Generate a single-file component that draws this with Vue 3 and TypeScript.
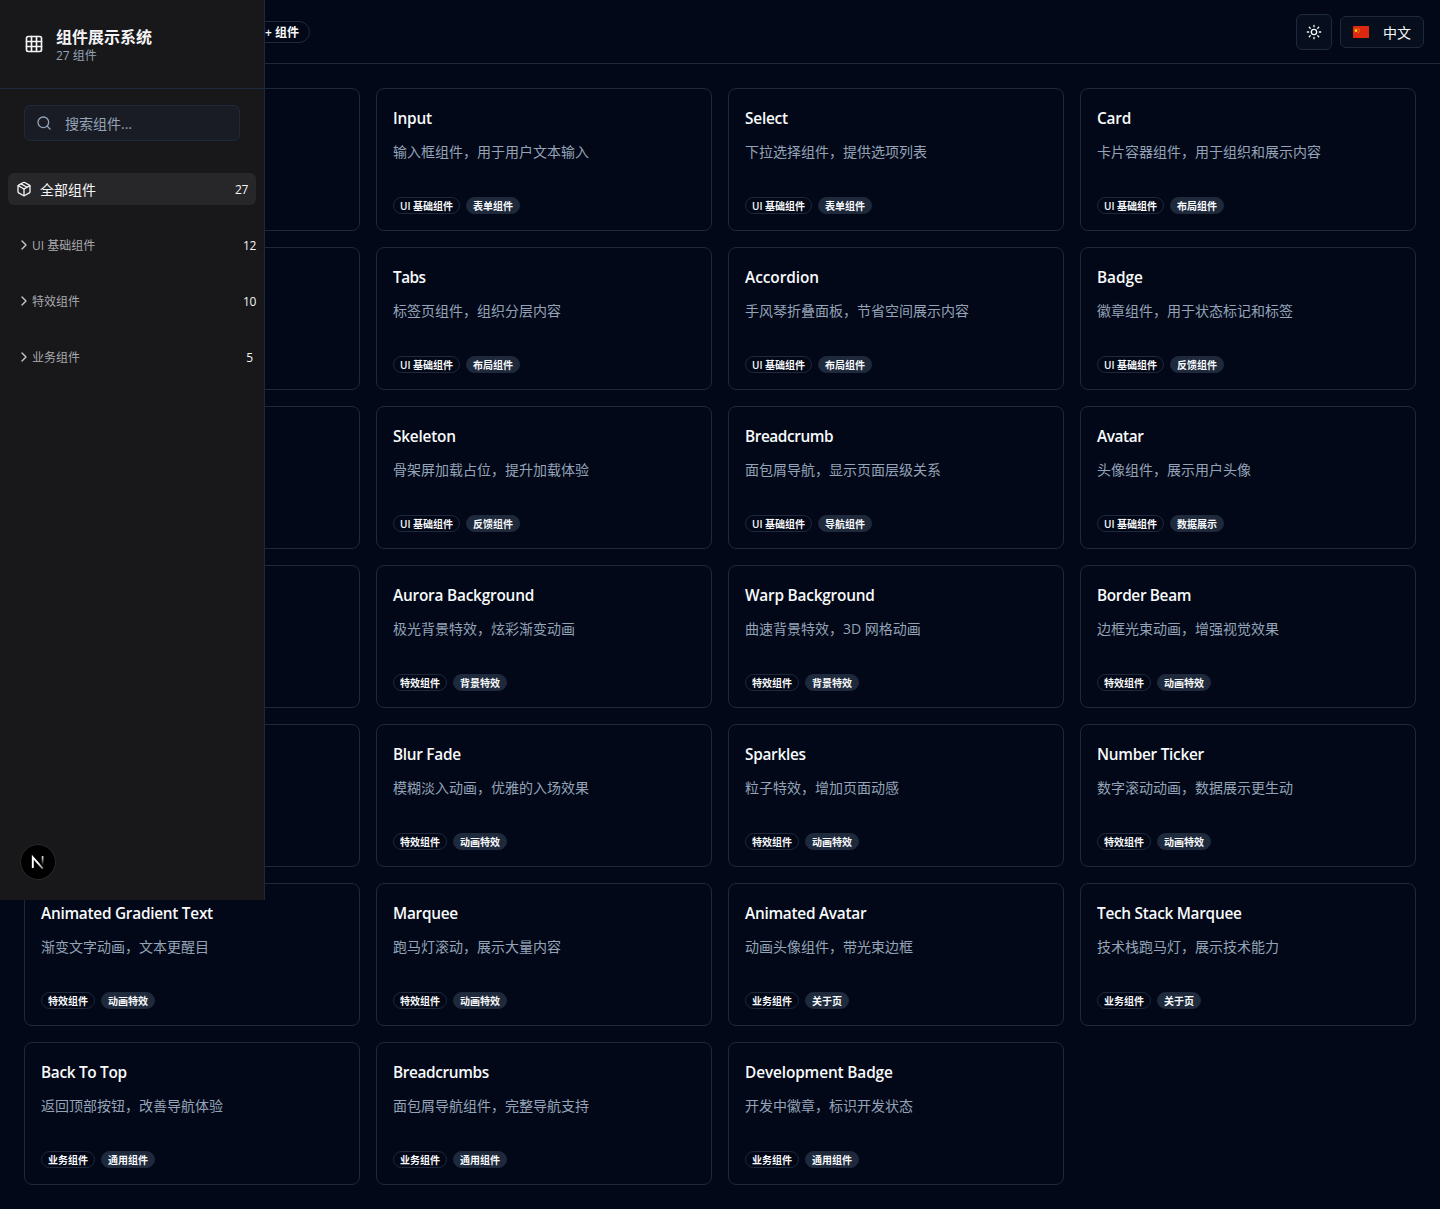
<script setup lang="ts">
interface Card {
  title: string
  desc: string
  category: string
  tag: string
  tracking?: number
}

interface Group {
  name: string
  count: number
}

const groups: Group[] = [
  { name: 'UI 基础组件', count: 12 },
  { name: '特效组件', count: 10 },
  { name: '业务组件', count: 5 },
]

const UI = 'UI 基础组件'
const FX = '特效组件'
const BIZ = '业务组件'

const cards: (Card | null)[] = [
  null,
  { title: 'Input', desc: '输入框组件，用于用户文本输入', category: UI, tag: '表单组件' },
  { title: 'Select', desc: '下拉选择组件，提供选项列表', category: UI, tag: '表单组件' },
  { title: 'Card', desc: '卡片容器组件，用于组织和展示内容', category: UI, tag: '布局组件' },
  null,
  { title: 'Tabs', desc: '标签页组件，组织分层内容', category: UI, tag: '布局组件', tracking: -0.55 },
  { title: 'Accordion', desc: '手风琴折叠面板，节省空间展示内容', category: UI, tag: '布局组件', tracking: -0.05 },
  { title: 'Badge', desc: '徽章组件，用于状态标记和标签', category: UI, tag: '反馈组件', tracking: -0.05 },
  null,
  { title: 'Skeleton', desc: '骨架屏加载占位，提升加载体验', category: UI, tag: '反馈组件' },
  { title: 'Breadcrumb', desc: '面包屑导航，显示页面层级关系', category: UI, tag: '导航组件', tracking: -0.43 },
  { title: 'Avatar', desc: '头像组件，展示用户头像', category: UI, tag: '数据展示', tracking: -0.4 },
  null,
  { title: 'Aurora Background', desc: '极光背景特效，炫彩渐变动画', category: FX, tag: '背景特效' },
  { title: 'Warp Background', desc: '曲速背景特效，3D 网格动画', category: FX, tag: '背景特效' },
  { title: 'Border Beam', desc: '边框光束动画，增强视觉效果', category: FX, tag: '动画特效', tracking: -0.35 },
  null,
  { title: 'Blur Fade', desc: '模糊淡入动画，优雅的入场效果', category: FX, tag: '动画特效', tracking: -0.3 },
  { title: 'Sparkles', desc: '粒子特效，增加页面动感', category: FX, tag: '动画特效', tracking: -0.3 },
  { title: 'Number Ticker', desc: '数字滚动动画，数据展示更生动', category: FX, tag: '动画特效', tracking: -0.28 },
  { title: 'Animated Gradient Text', desc: '渐变文字动画，文本更醒目', category: FX, tag: '动画特效', tracking: -0.27 },
  { title: 'Marquee', desc: '跑马灯滚动，展示大量内容', category: FX, tag: '动画特效', tracking: -0.28 },
  { title: 'Animated Avatar', desc: '动画头像组件，带光束边框', category: BIZ, tag: '关于页', tracking: -0.27 },
  { title: 'Tech Stack Marquee', desc: '技术栈跑马灯，展示技术能力', category: BIZ, tag: '关于页', tracking: -0.29 },
  { title: 'Back To Top', desc: '返回顶部按钮，改善导航体验', category: BIZ, tag: '通用组件', tracking: -0.32 },
  { title: 'Breadcrumbs', desc: '面包屑导航组件，完整导航支持', category: BIZ, tag: '通用组件', tracking: -0.38 },
  { title: 'Development Badge', desc: '开发中徽章，标识开发状态', category: BIZ, tag: '通用组件', tracking: -0.13 },
]
</script>

<template>
  <div class="page">
    <header class="topbar">
      <span class="total">27+ 组件</span>
      <div class="actions">
        <button class="theme" aria-label="theme">
          <svg width="16" height="16" viewBox="0 0 24 24" class="icon">
            <circle cx="12" cy="12" r="4" />
            <path d="M12 2v2M12 20v2M4.93 4.93l1.41 1.41M17.66 17.66l1.41 1.41M2 12h2M20 12h2M6.34 17.66l-1.41 1.41M19.07 4.93l-1.41 1.41" />
          </svg>
        </button>
        <button class="lang">
          <svg width="16" height="12" viewBox="0 0 16 12">
            <rect width="16" height="12" rx="0.5" fill="#de2910" />
            <path fill="#ffde00" d="M3 2.1l.56 1.7h1.8L3.9 4.86l.56 1.7L3 5.5 1.54 6.56l.56-1.7L.64 3.8h1.8z" />
            <circle cx="5.5" cy="2.2" r=".45" fill="#ffde00" />
            <circle cx="6.6" cy="3.4" r=".45" fill="#ffde00" />
            <circle cx="6.6" cy="5" r=".45" fill="#ffde00" />
            <circle cx="5.5" cy="6.3" r=".45" fill="#ffde00" />
          </svg>
          <span>中文</span>
        </button>
      </div>
    </header>

    <main class="grid">
      <article v-for="(card, i) in cards" :key="i" class="card">
        <template v-if="card">
          <h3 :style="{ letterSpacing: `${card.tracking ?? -0.22}px` }">{{ card.title }}</h3>
          <p>{{ card.desc }}</p>
          <div class="badges">
            <span class="badge outline">{{ card.category }}</span>
            <span class="badge solid">{{ card.tag }}</span>
          </div>
        </template>
      </article>
    </main>

    <aside class="sidebar">
      <div class="brand">
        <svg width="20" height="20" viewBox="0 0 24 24" class="icon">
          <rect x="3" y="3" width="18" height="18" rx="2" />
          <path d="M3 9h18M3 15h18M9 3v18M15 3v18" />
        </svg>
        <div class="brand-text">
          <strong>组件展示系统</strong>
          <span>27 组件</span>
        </div>
      </div>
      <div class="search">
        <svg width="16" height="16" viewBox="0 0 24 24" class="icon">
          <circle cx="11" cy="11" r="8" />
          <path d="m21 21-4.3-4.3" />
        </svg>
        <span>搜索组件...</span>
      </div>
      <nav>
        <a class="all">
          <svg width="16" height="16" viewBox="0 0 24 24" class="icon">
            <path d="m7.5 4.27 9 5.15" />
            <path d="M21 8a2 2 0 0 0-1-1.73l-7-4a2 2 0 0 0-2 0l-7 4A2 2 0 0 0 3 8v8a2 2 0 0 0 1 1.73l7 4a2 2 0 0 0 2 0l7-4A2 2 0 0 0 21 16Z" />
            <path d="m3.3 7 8.7 5 8.7-5" />
            <path d="M12 22V12" />
          </svg>
          <span class="all-name">全部组件</span>
          <span class="count">27</span>
        </a>
        <a v-for="g in groups" :key="g.name" class="group">
          <svg width="16" height="16" viewBox="0 0 24 24" class="icon chevron">
            <path d="m9 18 6-6-6-6" />
          </svg>
          <span class="group-name">{{ g.name }}</span>
          <span class="count">{{ g.count }}</span>
        </a>
      </nav>
      <div class="dev">
        <svg width="36" height="36" viewBox="0 0 36 36">
          <defs>
            <linearGradient id="devDiag" x1="20" y1="18" x2="24" y2="24" gradientUnits="userSpaceOnUse">
              <stop offset="0" stop-color="#fff" />
              <stop offset="1" stop-color="#fff" stop-opacity="0.45" />
            </linearGradient>
            <linearGradient id="devBar" x1="22" y1="12" x2="22" y2="21" gradientUnits="userSpaceOnUse">
              <stop offset="0" stop-color="#fff" />
              <stop offset="1" stop-color="#fff" stop-opacity="0" />
            </linearGradient>
          </defs>
          <path d="M12.8 24V13.2L22.8 24.6" fill="none" stroke="url(#devDiag)" stroke-width="1.9" />
          <path d="M22.6 12.2v8.8" fill="none" stroke="url(#devBar)" stroke-width="1.7" />
        </svg>
      </div>
    </aside>
  </div>
</template>

<style>
body {
  background: #020817;
}
</style>

<style scoped>
.page {
  position: relative;
  width: 1440px;
  height: 1209px;
  overflow: hidden;
  box-sizing: border-box;
  background: #020817;
  color: #f8fafc;
  font-family: "Open Sans", "Noto Sans CJK SC", sans-serif;
}
.page * {
  box-sizing: border-box;
}
.icon {
  fill: none;
  stroke: currentColor;
  stroke-width: 2;
  stroke-linecap: round;
  stroke-linejoin: round;
  flex: none;
}
.topbar {
  height: 64px;
  border-bottom: 1px solid #1e293b;
  padding: 1px 16px 0 0;
  display: flex;
  align-items: center;
  justify-content: space-between;
}
.total {
  width: 80px;
  height: 22px;
  margin-left: 230px;
  border: 1px solid #1e293b;
  border-radius: 11px;
  font-size: 12px;
  font-weight: 600;
  line-height: 21px;
  text-align: right;
  padding-right: 10px;
}
.actions {
  display: flex;
  align-items: center;
  gap: 8px;
}
button {
  background: #070e1d;
  border: 1px solid #1e293b;
  border-radius: 6px;
  color: inherit;
  font: inherit;
  padding: 0;
  display: flex;
  align-items: center;
}
.theme {
  width: 36px;
  height: 36px;
  justify-content: center;
}
.lang {
  width: 84px;
  height: 32px;
  padding: 0 12px;
  justify-content: space-between;
  font-size: 14px;
  font-weight: 400;
}
.grid {
  display: grid;
  grid-template-columns: repeat(4, 336px);
  grid-auto-rows: 143px;
  gap: 16px;
  padding: 24px;
}
.card {
  border: 1px solid #1e293b;
  border-radius: 8px;
  padding: 18px 16px 16px;
  display: flex;
  flex-direction: column;
}
h3 {
  margin: 0;
  font-size: 15.4px;
  font-weight: 600;
  line-height: 24px;
  white-space: nowrap;
}
p {
  margin: 11px 0 0;
  font-size: 14px;
  line-height: 20px;
  color: #94a3b8;
}
.badges {
  margin-top: auto;
  display: flex;
  gap: 6px;
}
.badge {
  height: 17px;
  padding: 0 6px;
  border: 1px solid #1e293b;
  border-radius: 9px;
  font-size: 10px;
  font-weight: 600;
  line-height: 16px;
  white-space: nowrap;
}
.solid {
  background: #1e293b;
}
.sidebar {
  position: absolute;
  left: 0;
  top: 0;
  width: 265px;
  height: 900px;
  background: #18181b;
  border-right: 1px solid #1e293b;
  color: #f4f4f5;
}
.brand {
  height: 89px;
  padding: 0 24px;
  border-bottom: 1px solid #1e293b;
  display: flex;
  align-items: center;
  gap: 12px;
}
.brand-text {
  display: flex;
  flex-direction: column;
  padding-top: 4px;
}
.brand-text strong {
  font-size: 16px;
  line-height: 20px;
  font-weight: 700;
}
.brand-text span {
  font-size: 12px;
  line-height: 18px;
  color: #94a3b8;
}
.search {
  margin: 16px 24px 0;
  height: 36px;
  border: 1px solid #1e293b;
  border-radius: 6px;
  background: #191c24;
  display: flex;
  align-items: center;
  gap: 13px;
  padding-left: 11px;
  font-size: 14px;
  color: #94a3b8;
}
nav {
  margin-top: 32px;
  padding: 0 8px;
  display: flex;
  flex-direction: column;
  gap: 24px;
}
.all {
  height: 32px;
  border-radius: 6px;
  background: #27272a;
  display: flex;
  align-items: center;
  gap: 8px;
  padding: 0 8px;
  font-size: 14px;
}
.all-name,
.group-name {
  flex: 1;
}
.count {
  width: 13px;
  text-align: center;
  font-size: 12px;
  letter-spacing: -0.4px;
}
.group {
  height: 32px;
  display: flex;
  align-items: center;
  padding-left: 8px;
  font-size: 12px;
}
.group-name {
  color: #a9a9ad;
}
.chevron {
  color: #c9c9cc;
}
.dev {
  position: absolute;
  left: 20px;
  top: 844px;
  width: 36px;
  height: 36px;
  border-radius: 50%;
  background: #000;
  box-shadow: inset 0 0 0 1px #2b2b2c;
}
.dev svg {
  display: block;
}
</style>
